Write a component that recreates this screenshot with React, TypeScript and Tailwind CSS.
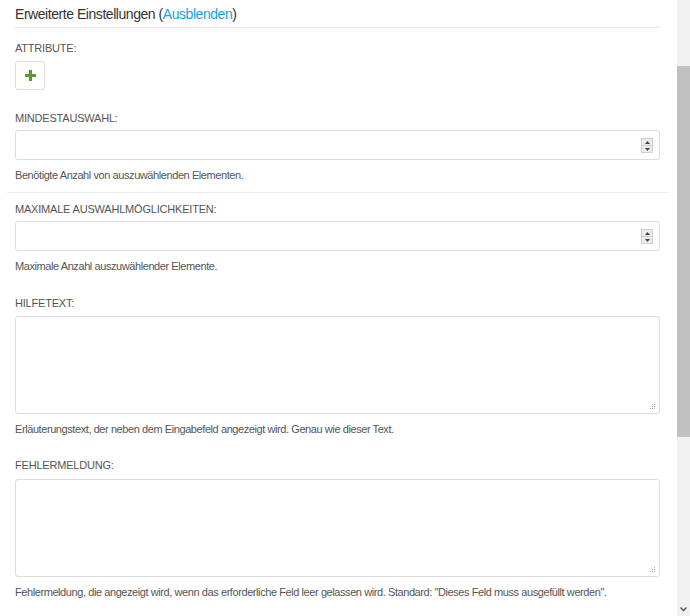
import React from 'react';

function Label({ children, className = '' }: { children: React.ReactNode; className?: string }) {
  return (
    <div className={`text-[11px] leading-[16px] uppercase tracking-[-0.2px] text-[#555] ${className}`}>
      {children}
    </div>
  );
}

function Help({ children, className = '' }: { children: React.ReactNode; className?: string }) {
  return (
    <div className={`text-[11px] leading-[14px] tracking-[-0.42px] text-[#555] ${className}`}>{children}</div>
  );
}

function Spinner() {
  return (
    <div className="absolute right-[6px] top-[7px] flex h-[15px] w-[12px] flex-col border border-[#cfcfcf] bg-[#ececec]">
      <div className="flex flex-1 items-center justify-center border-b border-[#cfcfcf]">
        <svg width="5" height="3" viewBox="0 0 5 3">
          <path d="M0 3 L2.5 0 L5 3 Z" fill="#444" />
        </svg>
      </div>
      <div className="flex flex-1 items-center justify-center">
        <svg width="5" height="3" viewBox="0 0 5 3">
          <path d="M0 0 L5 0 L2.5 3 Z" fill="#444" />
        </svg>
      </div>
    </div>
  );
}

function NumberField() {
  return (
    <div className="relative mt-[4px] h-[30px] rounded-[3px] border border-[#ddd] bg-white">
      <input type="text" className="h-full w-full bg-transparent px-2 text-[12px] outline-none" />
      <Spinner />
    </div>
  );
}

function Grip() {
  return (
    <svg className="absolute bottom-[3px] right-[3px]" width="7" height="7" viewBox="0 0 7 7">
      <rect x="5" y="1" width="1" height="1" fill="#aaa" />
      <rect x="3" y="3" width="1" height="1" fill="#aaa" />
      <rect x="5" y="3" width="1" height="1" fill="#aaa" />
      <rect x="1" y="5" width="1" height="1" fill="#aaa" />
      <rect x="3" y="5" width="1" height="1" fill="#aaa" />
      <rect x="5" y="5" width="1" height="1" fill="#aaa" />
    </svg>
  );
}

function TextField({ className = '' }: { className?: string }) {
  return (
    <div className={`relative h-[98px] rounded-[3px] border border-[#ddd] bg-white ${className}`}>
      <textarea className="h-full w-full resize-none bg-transparent p-2 text-[12px] outline-none" />
      <Grip />
    </div>
  );
}

export default function App() {
  return (
    <div
      className="flex h-[616px] w-[690px] overflow-hidden bg-white"
      style={{ fontFamily: '"Liberation Sans", Arial, sans-serif' }}
    >
      <div className="w-[677px] pl-[7px] pr-[9px]">
        {/* Header */}
        <div className="mx-[8px] border-b border-[#e6e6e6] pb-[3px] pt-[4px] text-[14px] leading-[20px] tracking-[-0.45px] text-[#333]">
          Erweiterte Einstellungen (<a className="cursor-pointer text-[#1a9fe0]">Ausblenden</a>)
        </div>

        <div className="px-[8px]">
          <Label className="mt-[12px]">Attribute:</Label>
          <button className="mt-[5px] flex h-[29px] w-[30px] items-center justify-center rounded-[3px] border border-[#ddd] bg-white">
            <svg width="11" height="11" viewBox="0 0 11 11">
              <path d="M4 0 H7 V4 H11 V7 H7 V11 H4 V7 H0 V4 H4 Z" fill="#5b9a2a" />
            </svg>
          </button>

          <Label className="mt-[20px]">Mindestauswahl:</Label>
          <NumberField />
          <Help className="mt-[8px]">Benötigte Anzahl von auszuwählenden Elementen.</Help>
        </div>

        <div className="mt-[10px] border-t border-[#ececec] px-[8px]">
          <Label className="mt-[8px]">Maximale Auswahlmöglichkeiten:</Label>
          <NumberField />
          <Help className="mt-[8px]">Maximale Anzahl auszuwählender Elemente.</Help>

          <Label className="mt-[22px]">Hilfetext:</Label>
          <TextField className="mt-[5px]" />
          <Help className="mt-[8px]">
            Erläuterungstext, der neben dem Eingabefeld angezeigt wird. Genau wie dieser Text.
          </Help>

          <Label className="mt-[21px]">Fehlermeldung:</Label>
          <TextField className="mt-[6px]" />
          <Help className="mt-[8px]">
            Fehlermeldung, die angezeigt wird, wenn das erforderliche Feld leer gelassen wird.
            Standard: "Dieses Feld muss ausgefüllt werden".
          </Help>
        </div>
      </div>

      {/* Scrollbar */}
      <div className="flex w-[13px] flex-col bg-[#f1f1f1]">
        <div className="h-[66px]" />
        <div className="h-[371px] bg-[#c1c1c1]" />
        <div className="flex-1" />
        <div className="flex h-[14px] items-center justify-center">
          <svg width="7" height="5" viewBox="0 0 7 5">
            <path d="M0.5 0.5 L3.5 3.5 L6.5 0.5" fill="none" stroke="#505050" strokeWidth="1.4" />
          </svg>
        </div>
      </div>
    </div>
  );
}
